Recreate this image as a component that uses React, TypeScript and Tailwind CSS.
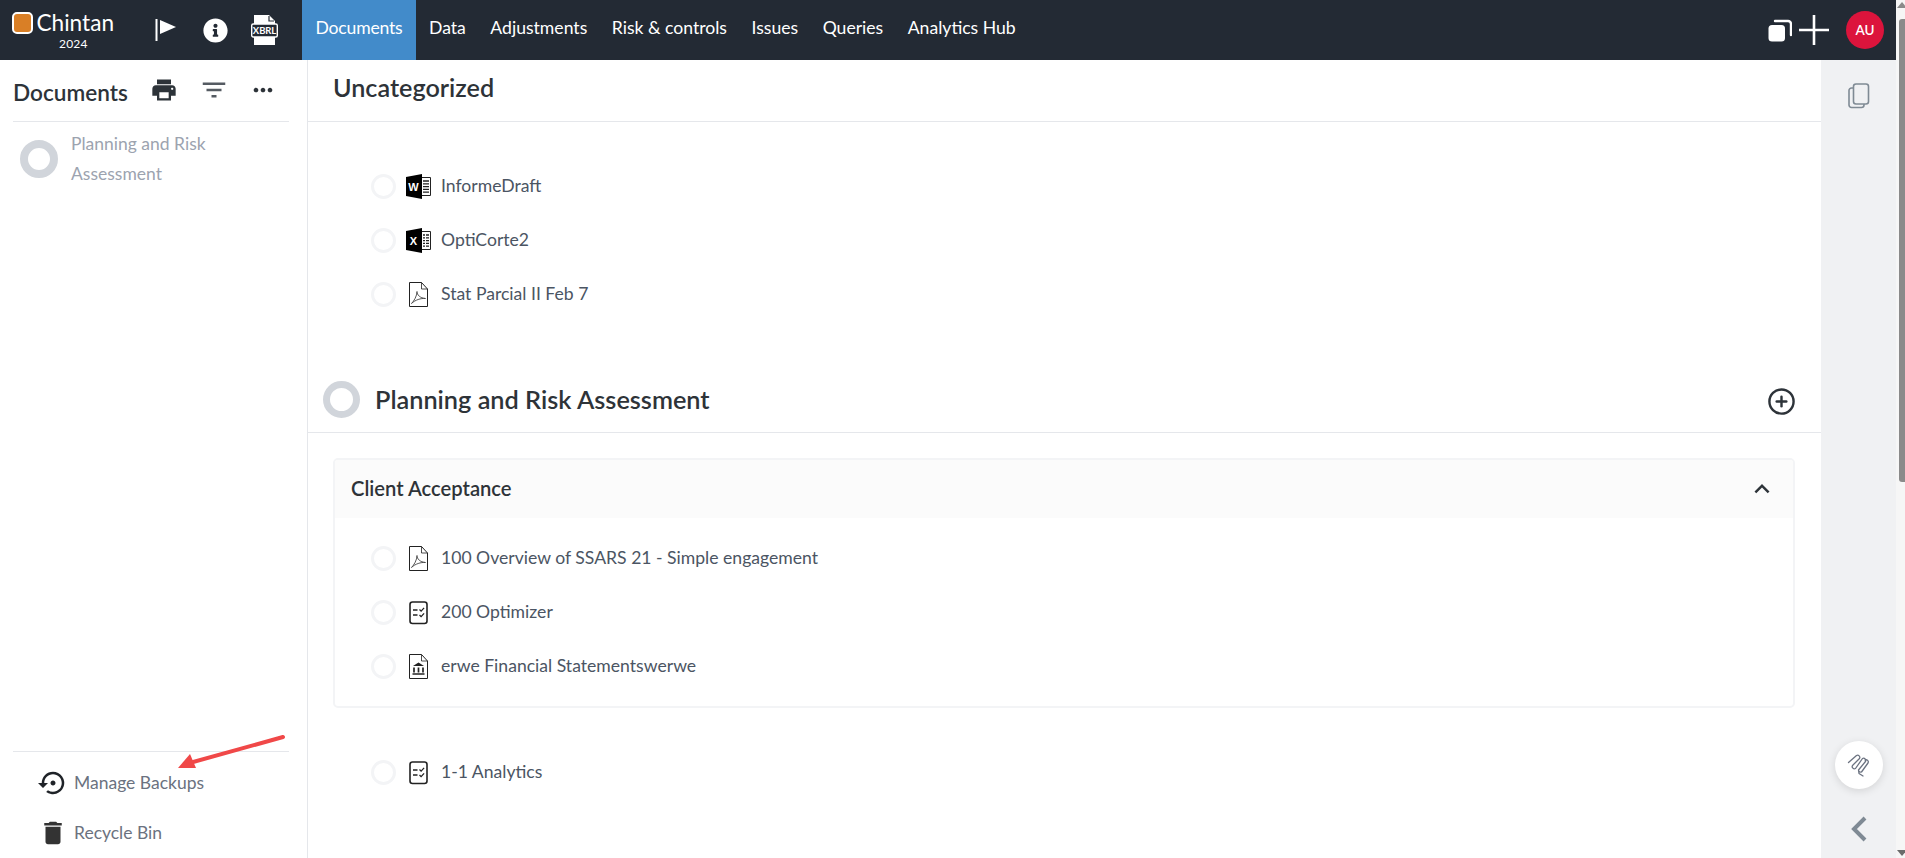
import React from "react";
import { MdPrint, MdFilterList, MdMoreHoriz, MdSettingsBackupRestore, MdDelete, MdKeyboardArrowUp } from "react-icons/md";
import { FaInfoCircle } from "react-icons/fa";
import { LuCirclePlus } from "react-icons/lu";

const Word = () => (
  <svg width="25" height="25" viewBox="0 0 25 25" className="shrink-0">
    <path d="M0 3 L16 0 V25 L0 22 Z" fill="#000" />
    <path d="M16 3.5 H24.5 V21.5 H16" fill="#fff" stroke="#222" strokeWidth="1" />
    <path d="M17 7h6M17 9.8h6M17 12.6h6M17 15.4h6M17 18.2h6" stroke="#222" strokeWidth="1.3" />
    <text x="7.5" y="16.5" textAnchor="middle" fontSize="11" fontWeight="700" fill="#fff" fontFamily="Liberation Sans, sans-serif">W</text>
  </svg>
);
const Excel = () => (
  <svg width="25" height="25" viewBox="0 0 25 25" className="shrink-0">
    <path d="M0 3 L16 0 V25 L0 22 Z" fill="#000" />
    <path d="M16 3.5 H24.5 V21.5 H16" fill="#fff" stroke="#222" strokeWidth="1" />
    <path d="M17 7h6M17 9.8h6M17 12.6h6M17 15.4h6M17 18.2h6" stroke="#222" strokeWidth="1.3" />
    <path d="M19.5 5v15" stroke="#fff" strokeWidth="1" />
    <text x="7.5" y="16.5" textAnchor="middle" fontSize="11" fontWeight="700" fill="#fff" fontFamily="Liberation Sans, sans-serif">X</text>
  </svg>
);
const Pdf = () => (
  <svg width="25" height="25" viewBox="0 0 25 25" className="shrink-0">
    <path d="M3.5 .5 H15.5 L21.5 7 V24.5 H3.5 Z" fill="#fff" stroke="#222" strokeWidth="1" />
    <path d="M15.5 .5 V7 H21.5" fill="none" stroke="#222" strokeWidth=".8" />
    <path d="M5.5 21.5 C8 19 11 14 11 9.5 C11 13 14 16 19.5 16.5 C15 16 9 18 5.5 21.5 Z" fill="none" stroke="#444" strokeWidth=".9" />
  </svg>
);
const Check = () => (
  <svg width="25" height="25" viewBox="0 0 25 25" className="shrink-0">
    <rect x="4" y="2" width="17" height="21.5" rx="2.5" fill="#fff" stroke="#222" strokeWidth="1.6" />
    <path d="M7 10h4.5M7 15h4.5" stroke="#222" strokeWidth="1.4" />
    <path d="M13.5 9.5l1.6 1.6 3-3.2M13.5 15l1.6 1.6 3-3.2" fill="none" stroke="#222" strokeWidth="1.3" />
  </svg>
);
const Bank = () => (
  <svg width="25" height="25" viewBox="0 0 25 25" className="shrink-0">
    <path d="M3.5 .5 H15.5 L21.5 7 V24.5 H3.5 Z" fill="#fff" stroke="#222" strokeWidth="1" />
    <path d="M15.5 .5 V7 H21.5" fill="none" stroke="#222" strokeWidth=".8" />
    <path d="M12.5 8.5 L18 12 H7 Z" fill="#222" />
    <path d="M8 13.5v5M12.5 13.5v5M17 13.5v5" stroke="#222" strokeWidth="1.7" />
    <path d="M6.5 20h12" stroke="#222" strokeWidth="1.5" />
  </svg>
);

const Row = ({ icon, label }: { icon: React.ReactNode; label: string }) => (
  <div className="flex h-[54px] items-center">
    <span className="ml-[371px] h-[25px] w-[25px] shrink-0 rounded-full border-[3px] border-[#f3f4f6]" />
    <span className="ml-[10px] flex w-[25px] justify-center">{icon}</span>
    <span className="ml-[10px] text-[17.6px] text-[#4b5563]">{label}</span>
  </div>
);

const NAV = ["Data", "Adjustments", "Risk & controls", "Issues", "Queries", "Analytics Hub"];

export default function App() {
  return (
    <div className="relative flex h-[858px] w-[1905px] overflow-hidden bg-white font-['Lato','Noto_Sans',sans-serif]">
      <div className="flex min-w-0 flex-1 flex-col">
        <header className="flex h-[60px] shrink-0 items-center bg-[#232a34] text-white">
          <div className="flex w-[302px] shrink-0 items-center">
            <div className="ml-[12px] flex w-[102px] flex-col">
              <div className="flex items-center">
                <span className="box-border h-[22px] w-[22px] rounded-[5px] border-2 border-white bg-[#d97f26]" />
                <span className="ml-[3px] text-[22.6px] leading-[26px]">Chintan</span>
              </div>
              <span className="mt-[1px] pl-[47px] text-[12px] leading-[14px] tracking-[.2px]">2024</span>
            </div>
            <svg width="24" height="24" viewBox="0 0 24 24" className="ml-[39px]">
              <path d="M3.5 1v22" stroke="#fff" strokeWidth="2" />
              <path d="M7 2 L23 9 L7 16 Z" fill="#fff" />
            </svg>
            <FaInfoCircle className="ml-[26px] text-[25px]" />
            <div className="relative ml-[23px] h-[30px] w-[27px]">
              <svg width="27" height="30" viewBox="0 0 27 30" className="absolute inset-0">
                <path d="M3 0 H18 L24 6 V30 H3 Z" fill="#fff" />
                <path d="M18 1 V6 H23" fill="none" stroke="#232a34" strokeWidth="1.2" />
                <rect x=".7" y="9" width="25.6" height="13" rx="1.5" fill="#232a34" stroke="#fff" strokeWidth="1.4" />
              </svg>
              <span className="absolute inset-x-0 top-[9px] text-center text-[9.5px] font-bold leading-[13px] tracking-[-.1px]">XBRL</span>
            </div>
          </div>
          <nav className="flex h-full items-center">
            <span className="flex h-full w-[114px] items-center justify-center bg-[#428bca] pb-[4px] text-[17.6px] tracking-[-.2px]">Documents</span>
            <div className="ml-[13px] flex items-center gap-[24.5px] pb-[4px] text-[17.6px]">
              {NAV.map((n) => (
                <span key={n}>{n}</span>
              ))}
            </div>
          </nav>
          <div className="ml-auto flex items-center">
            <svg width="24" height="23" viewBox="0 0 24 23">
              <rect x="0.5" y="6" width="16.5" height="16.5" rx="3.5" fill="#fff" />
              <path d="M7 2 H20 A3 3 0 0 1 23 5 V16" fill="none" stroke="#fff" strokeWidth="2.4" strokeLinecap="round" />
            </svg>
            <svg width="30" height="30" viewBox="0 0 30 30" className="ml-[7px]">
              <path d="M15 0v30M0 15h30" stroke="#fff" strokeWidth="2.6" />
            </svg>
            <span className="ml-[17px] mr-[12px] flex h-[38px] w-[38px] items-center justify-center rounded-full bg-[#dc143c] text-[13.5px] font-semibold">AU</span>
          </div>
        </header>

        <div className="flex min-h-0 flex-1">
          <aside className="flex w-[308px] shrink-0 flex-col border-r border-[#e5e7eb]">
            <div className="ml-[13px] mr-[18px] flex h-[62px] shrink-0 items-center border-b border-[#e5e7eb]">
              <span className="mt-[6px] text-[22.6px] font-semibold leading-none text-[#2d3339]">Documents</span>
              <MdPrint className="ml-[22px] -mt-[2px] text-[28px] text-[#2d3339]" />
              <MdFilterList className="ml-[21px] -mt-[2px] text-[30px] text-[#555b62]" />
              <MdMoreHoriz className="ml-[20px] -mt-[2px] text-[28px] text-[#2d3339]" />
            </div>
            <div className="mt-[7px] flex items-center pl-[20px]">
              <span className="h-[38px] w-[38px] shrink-0 rounded-full border-[8px] border-[#d1d5db]" />
              <span className="ml-[13px] w-[190px] text-[17.5px] leading-[30px] text-[#9ca3af]">Planning and Risk Assessment</span>
            </div>
            <div className="ml-[13px] mr-[18px] mt-auto border-t border-[#e5e7eb] pt-[6px]">
              <div className="flex h-[50px] items-center pl-[25px]">
                <MdSettingsBackupRestore className="w-[30px] text-[30px] text-[#1f2328]" />
                <span className="ml-[6px] text-[17.5px] text-[#6b7280]">Manage Backups</span>
              </div>
              <div className="flex h-[50px] items-center pl-[25px]">
                <MdDelete className="w-[30px] text-[36px] text-[#333]" />
                <span className="ml-[6px] text-[17.5px] text-[#6b7280]">Recycle Bin</span>
              </div>
            </div>
          </aside>

          <main className="min-w-0 flex-1 overflow-hidden">
            <div className="flex h-[62px] items-center border-b border-[#e5e7eb] pl-[25px]">
              <h2 className="-mt-[6px] text-[25.2px] font-semibold text-[#2e3338]">Uncategorized</h2>
            </div>
            <div className="-ml-[308px] pt-[37px]">
              <Row icon={<Word />} label="InformeDraft" />
              <Row icon={<Excel />} label="OptiCorte2" />
              <Row icon={<Pdf />} label="Stat Parcial II Feb 7" />
            </div>
            <div className="mt-[46px] flex h-[66px] items-center border-b border-[#e5e7eb] pl-[15px]">
              <span className="h-[37px] w-[37px] shrink-0 rounded-full border-[7px] border-[#d1d5db]" />
              <h2 className="ml-[15px] text-[25.3px] font-semibold text-[#2e3338]">Planning and Risk Assessment</h2>
              <LuCirclePlus className="ml-auto mr-[25px] mt-[3px] text-[29px] text-[#2d3339]" />
            </div>
            <section className="ml-[25px] mr-[26px] mt-[25px] overflow-hidden rounded-[5px] border-2 border-[#f3f4f6] pb-[13px]">
              <div className="flex h-[58px] items-center bg-[#fbfbfb] pl-[16px] pr-[16px]">
                <h3 className="-mt-[2px] text-[20.2px] font-semibold text-[#2e3338]">Client Acceptance</h3>
                <MdKeyboardArrowUp className="ml-auto text-[30px] text-[#2d3339]" />
              </div>
              <div className="-ml-[335px] pt-[13px]">
                <Row icon={<Pdf />} label="100 Overview of SSARS 21 - Simple engagement" />
                <Row icon={<Check />} label="200 Optimizer" />
                <Row icon={<Bank />} label="erwe Financial Statementswerwe" />
              </div>
            </section>
            <div className="-ml-[308px] mt-[37px]">
              <Row icon={<Check />} label="1-1 Analytics" />
            </div>
          </main>

          <aside className="flex w-[75px] shrink-0 flex-col items-center bg-[#f0f1f3] pt-[23px]">
            <svg width="22" height="26" viewBox="0 0 22 26">
              <rect x="5.5" y="1" width="15" height="20" rx="2.5" fill="none" stroke="#7f8a94" strokeWidth="1.6" />
              <path d="M5 5 H3.5 A2.5 2.5 0 0 0 1 7.5 V22 A2.5 2.5 0 0 0 3.5 24.5 H13.5 A2.5 2.5 0 0 0 16 22 V21" fill="none" stroke="#7f8a94" strokeWidth="1.6" />
            </svg>
            <button className="mt-auto flex h-[48px] w-[48px] items-center justify-center rounded-full bg-white shadow-[0_2px_8px_rgba(0,0,0,0.12)]">
              <svg width="24" height="24" viewBox="0 0 24 24" fill="none" stroke="#6b7280" strokeWidth="1.3" strokeLinecap="round" strokeLinejoin="round">
                <path d="M1.5 9.5 L9.5 2.5 A2.2 2.2 0 0 1 12.5 5.5 L5.5 12.5 A2.2 2.2 0 0 0 8.5 15.5 L15.5 5.5 A2.2 2.2 0 0 1 18.5 8.5 L11.5 17 A2.2 2.2 0 0 0 14.5 19 L21 10 A2.2 2.2 0 0 0 18 7 M11.5 17 L12 20.5 L16 23" />
              </svg>
            </button>
            <svg width="16" height="26" viewBox="0 0 16 26" className="mb-[16px] mt-[27px]">
              <path d="M14 2 L3 13 L14 24" fill="none" stroke="#7f8a94" strokeWidth="4" />
            </svg>
          </aside>
        </div>
      </div>

      <div className="flex w-[9px] shrink-0 flex-col items-end overflow-hidden bg-[#f6f6f6]">
        <span className="-mr-[2px] mt-[2px] h-0 w-0 border-x-[5px] border-b-[6px] border-x-transparent border-b-[#8a8a8a]" />
        <span className="mt-[11px] h-[463px] w-[6px] rounded-tl-[3px] rounded-bl-[3px] bg-[#8a8a8a]" />
        <span className="-mr-[2px] mb-[2px] mt-auto h-0 w-0 border-x-[5px] border-t-[6px] border-x-transparent border-t-[#6b6b6b]" />
      </div>

      <svg width="120" height="50" viewBox="0 0 120 50" className="absolute left-[172px] top-[730px]">
        <path d="M111 7 L14 34" stroke="#f04848" strokeWidth="4" strokeLinecap="round" />
        <path d="M6 38 L18 24 L24 38 Z" fill="#f04848" />
      </svg>
    </div>
  );
}
